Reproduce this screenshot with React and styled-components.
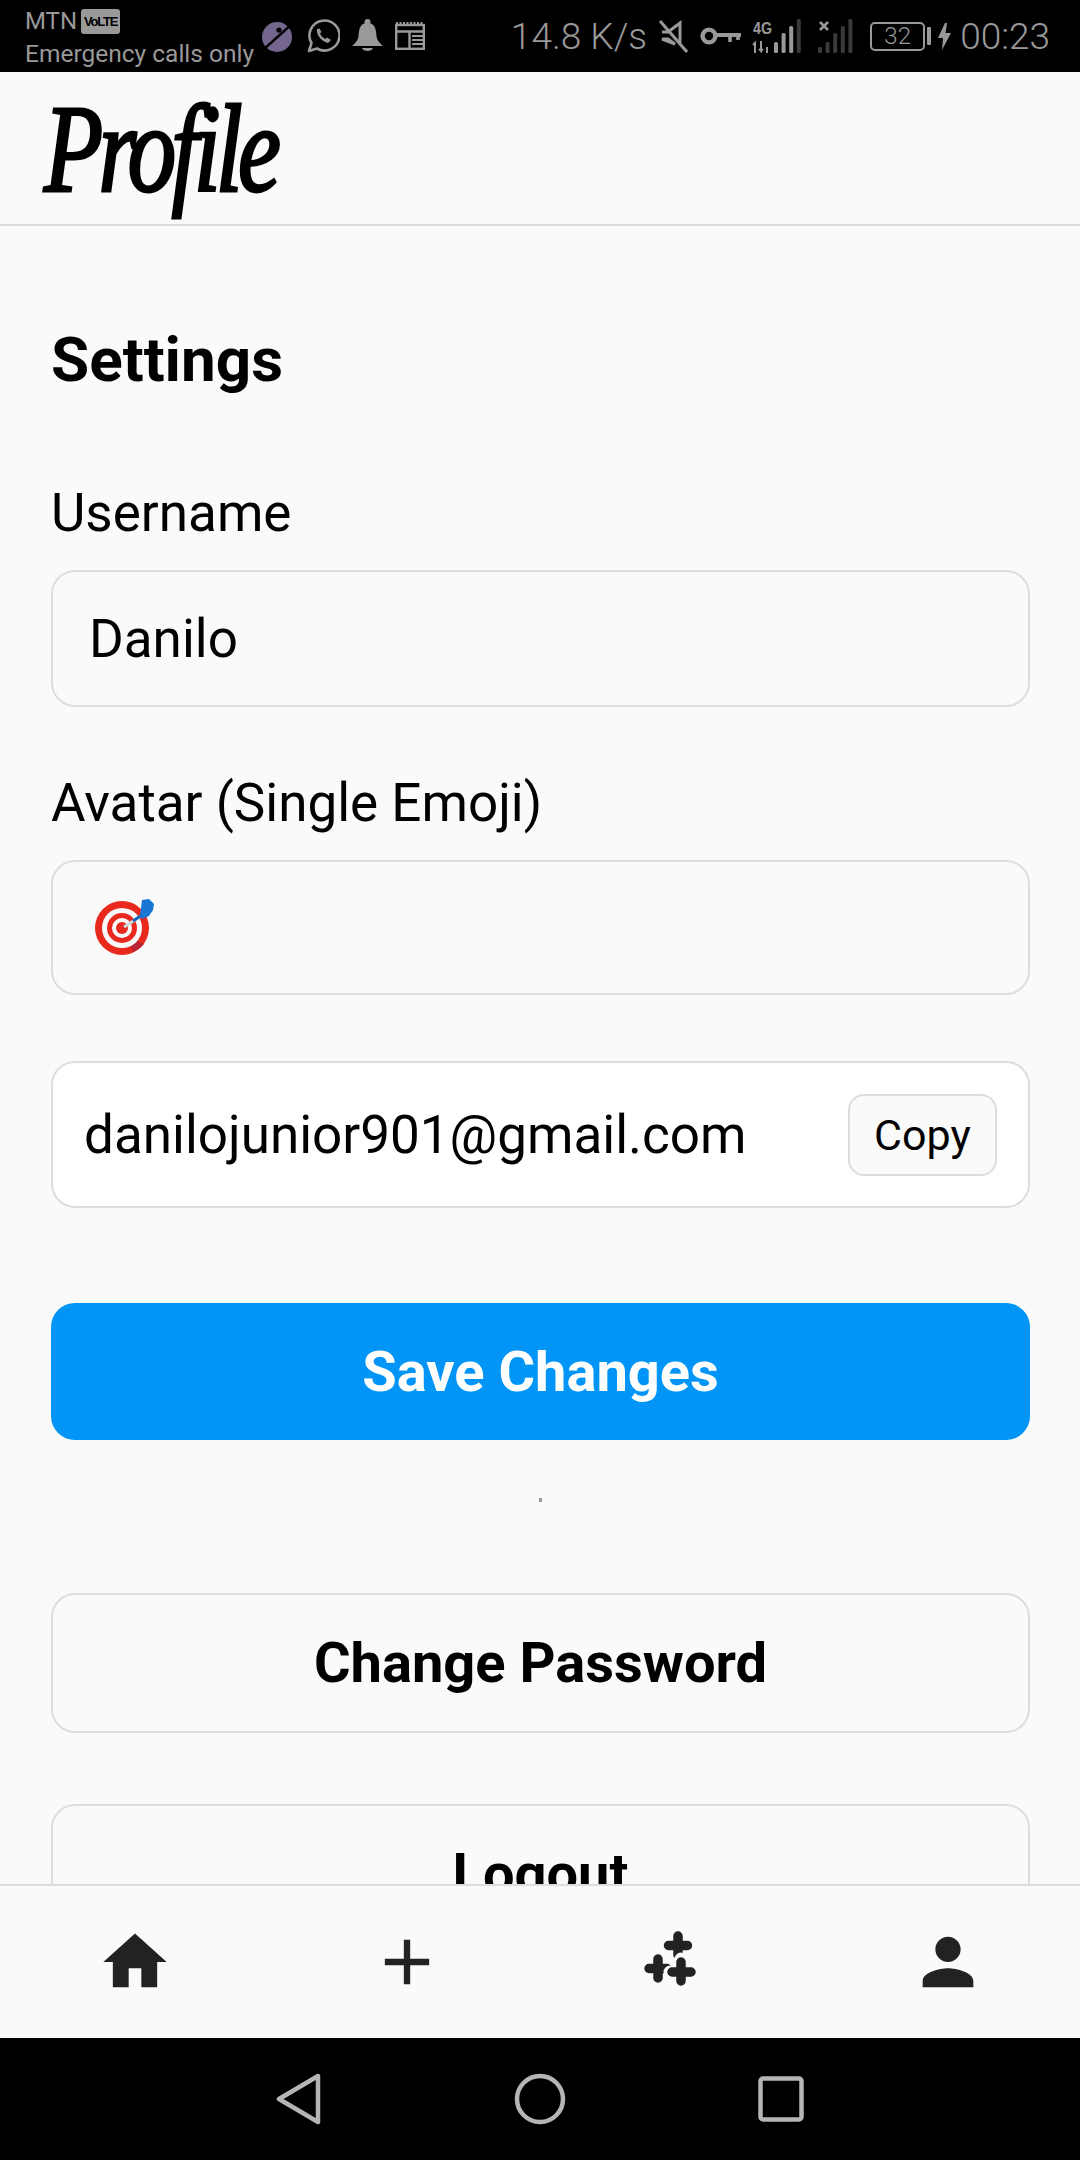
import React from "react";
import styled, { createGlobalStyle } from "styled-components";
import { MdHome, MdAdd, MdPerson } from "react-icons/md";

const GlobalStyle = createGlobalStyle`
  html, body {
    margin: 0;
    padding: 0;
    background: #000;
  }
  * {
    box-sizing: border-box;
  }
`;

const Screen = styled.div`
  width: 1080px;
  height: 2160px;
  display: flex;
  flex-direction: column;
  background: #fafafa;
  font-family: Roboto, "Liberation Sans", sans-serif;
  color: #000;
  overflow: hidden;
`;

/* system status bar */
const StatusBar = styled.div`
  height: 72px;
  flex: none;
  background: #000;
  color: #999;
  display: flex;
  align-items: center;
  justify-content: space-between;
  padding: 0 30px 0 25px;
`;

const StatusLeft = styled.div`
  display: flex;
  align-items: center;
  gap: 12px;
`;

const Carrier = styled.div`
  display: flex;
  flex-direction: column;
  width: 225px;
`;

const CarrierName = styled.div`
  display: flex;
  align-items: center;
  gap: 4px;
  height: 36px;
  font-size: 24px;
`;

const VolteBadge = styled.span`
  background: #999;
  color: #000;
  border-radius: 3px;
  font-family: "Liberation Sans", sans-serif;
  font-size: 13px;
  font-weight: 700;
  letter-spacing: -1.2px;
  line-height: 25px;
  padding: 0 3px;
`;

const CarrierNote = styled.div`
  font-size: 24.5px;
  line-height: 30px;
  white-space: nowrap;
`;

const StatusIcons = styled.div`
  display: flex;
  align-items: center;
  gap: 12px;
`;

const StatusRight = styled.div`
  display: flex;
  align-items: center;
`;

const StatusSlot = styled.span`
  display: flex;
  align-items: center;
  margin-left: ${(p) => p.$left}px;
`;

const StatusText = styled.span`
  font-size: 37px;
  font-weight: 300;
  white-space: nowrap;
`;

const BatteryBody = styled.div`
  width: 55px;
  height: 29px;
  border: 2px solid #999;
  border-radius: 5px;
  display: flex;
  align-items: center;
  justify-content: center;
  font-size: 24px;
  font-weight: 300;
`;

const BatteryCap = styled.div`
  width: 4px;
  height: 18px;
  margin-left: 2px;
  background: #999;
  border-radius: 1px;
`;

const Header = styled.header`
  height: 154px;
  flex: none;
  border-bottom: 2px solid #ddd;
  padding-left: 44px;
  display: flex;
  align-items: center;
`;

const Logo = styled.h1`
  margin: 0;
  font-family: "Liberation Serif", serif;
  font-style: italic;
  font-weight: 400;
  font-size: 124px;
  line-height: 1;
  letter-spacing: -6px;
  -webkit-text-stroke: 3px #000;
  transform-origin: left center;
  transform: translateY(2px) scaleX(0.78);
`;

const Content = styled.main`
  flex: 1;
  min-height: 0;
  overflow: hidden;
  padding: 99px 50px 0 51px;
`;

const PageTitle = styled.h2`
  margin: 0;
  font-size: 62px;
  font-weight: 700;
  line-height: 70px;
`;

const Label = styled.div`
  margin-top: ${(p) => p.$top}px;
  font-size: 53px;
  line-height: 60px;
`;

const Field = styled.div`
  margin-top: 27px;
  height: ${(p) => p.$height}px;
  border: 2px solid #ddd;
  border-radius: 24px;
  padding-left: 36px;
  display: flex;
  align-items: center;
  font-size: 53px;
`;

const EmojiSlot = styled.span`
  display: flex;
  margin: 0 0 3px 6px;
`;

const EmailRow = styled.div`
  margin-top: 66px;
  height: 147px;
  background: #fff;
  border: 2px solid #ddd;
  border-radius: 24px;
  padding: 0 31px;
  display: flex;
  align-items: center;
  justify-content: space-between;
  font-size: 53px;
`;

const CopyButton = styled.div`
  width: 149px;
  height: 82px;
  background: #fafafa;
  border: 2px solid #ddd;
  border-radius: 16px;
  display: flex;
  align-items: center;
  justify-content: center;
  font-size: 43px;
`;

const Button = styled.div`
  margin-top: ${(p) => p.$top}px;
  height: ${(p) => p.$height}px;
  border-radius: 24px;
  display: flex;
  align-items: center;
  justify-content: center;
  font-size: 56px;
  font-weight: 700;
  background: ${(p) => (p.$primary ? "#0095f6" : "transparent")};
  color: ${(p) => (p.$primary ? "#fff" : "#000")};
  border: ${(p) => (p.$primary ? "none" : "2px solid #ddd")};
`;

const Speck = styled.div`
  width: 3px;
  height: 4px;
  margin: 58px auto 0;
  background: #999;
`;

const TabBar = styled.nav`
  height: 154px;
  flex: none;
  border-top: 2px solid #ddd;
  background: #fafafa;
  display: grid;
  grid-template-columns: repeat(4, 1fr);
  color: #222;
`;

const Tab = styled.div`
  display: flex;
  align-items: center;
  justify-content: center;
  padding-left: ${(p) => p.$shift || 0}px;
`;

const ClusterSvg = styled.svg`
  margin: 0 10px 7px 0;
`;

const NavBar = styled.div`
  height: 122px;
  flex: none;
  background: #000;
  display: flex;
  align-items: center;
  justify-content: center;
  gap: 192px;
`;

const PlanetIcon = () => (
  <svg width="32" height="32" viewBox="0 0 32 32">
    <circle cx="15" cy="17" r="15" fill="#75668f" />
    <path d="M1 30 L31 3" stroke="#000" strokeWidth="2.4" />
    <circle cx="17" cy="10" r="2.6" fill="#000" />
  </svg>
);

const WhatsappIcon = () => (
  <svg width="34" height="34" viewBox="0 0 34 34" fill="none">
    <path
      d="M3 32 L5.5 24 A15 15 0 1 1 11 29.5 Z"
      stroke="#999"
      strokeWidth="2.6"
      strokeLinejoin="round"
    />
    <path
      d="M11 10 C10 14 14 22 22 24 L25 21 L21 18.5 L19.5 20 C17 19 15 17 14 14.5 L15.5 13 L13.5 9.5 Z"
      fill="#999"
    />
  </svg>
);

const BellIcon = () => (
  <svg width="31" height="34" viewBox="0 0 31 34" fill="#999">
    <circle cx="15.5" cy="3" r="3" />
    <path d="M15.5 4 C8 4 7 10 6.5 17 C6 22 3 24 0 27 L31 27 C28 24 25 22 24.5 17 C24 10 23 4 15.5 4 Z" />
    <path d="M10 29 L21 29 C20 33 11 33 10 29 Z" />
  </svg>
);

const NewsIcon = () => (
  <svg width="30" height="28" viewBox="0 0 30 28" fill="none" stroke="#999">
    <rect x="1.2" y="3" width="27.6" height="23.8" strokeWidth="2.4" />
    <path d="M1 9.5 H29 M14.5 9.5 V27" strokeWidth="2.4" />
    <path d="M17 14 H28 M17 18 H28 M17 22 H28" strokeWidth="2" />
    <path d="M1 1 H29" strokeWidth="2" strokeDasharray="2 1.5" />
  </svg>
);

const MuteIcon = () => (
  <svg width="30" height="34" viewBox="0 0 30 34" fill="none" stroke="#999">
    <path d="M4 13 H10 L22 4 V24 M17 25 L10 20 H4 Z" strokeWidth="3" />
    <path d="M2 2 L29 33" strokeWidth="3" />
  </svg>
);

const KeyIcon = () => (
  <svg width="41" height="18" viewBox="0 0 41 18" fill="none" stroke="#999">
    <circle cx="9" cy="9" r="6.4" strokeWidth="4.4" />
    <path d="M15 8 H41" strokeWidth="4" />
    <path d="M30 8 V15 M38 8 V13" strokeWidth="3.6" />
  </svg>
);

// signal strength bars, only the first `lit` are bright
const SignalBars = ({ x, lit, total }) => {
  const heights = [6, 11, 20, 27, 34];
  const offset = 5 - total;
  return heights.slice(offset).map((h, i) => (
    <rect
      key={i}
      x={x + i * 7.6}
      y={34 - h}
      width="4"
      height={h}
      rx="1.5"
      fill={i < lit ? "#999" : "#3a3a3a"}
    />
  ));
};

const Signal4G = () => (
  <svg width="53" height="34" viewBox="0 0 53 34" overflow="visible">
    <text
      x="0"
      y="15"
      fontFamily="Liberation Sans, sans-serif"
      fontSize="17"
      fontWeight="700"
      fill="#999"
      textLength="19"
      lengthAdjust="spacingAndGlyphs"
    >
      4G
    </text>
    <path d="M2 34 V24 L0 26 M8 22 V32 L6 30 M8 32 L10 30 M14 34 V28" stroke="#999" strokeWidth="2" fill="none" />
    <SignalBars x={21} lit={3} total={4} />
  </svg>
);

const SignalNone = () => (
  <svg width="36" height="34" viewBox="0 0 36 34">
    <path d="M2 3 L10 11 M10 3 L2 11" stroke="#999" strokeWidth="2.6" />
    <SignalBars x={0} lit={0} total={5} />
  </svg>
);

const BoltIcon = () => (
  <svg width="13" height="27" viewBox="0 0 13 27" fill="#999">
    <path d="M7 0 L0 15 H5 L4 27 L13 10 H7.5 L9 0 Z" />
  </svg>
);

const TargetEmoji = () => (
  <svg width="60" height="58" viewBox="0 0 60 58" role="img" aria-label="target">
    <circle cx="27" cy="31" r="27" fill="#e9291d" />
    <path d="M49 47 A27 27 0 0 1 38 55 L32 40 Z" fill="#b92237" />
    <circle cx="27" cy="31" r="20" fill="#fafafa" />
    <circle cx="27" cy="31" r="15" fill="#e9291d" />
    <circle cx="27" cy="31" r="10" fill="#fafafa" />
    <circle cx="27" cy="31" r="6" fill="#e9291d" />
    <path d="M29 30 L46 19" stroke="#cfd8dc" strokeWidth="3" />
    <path d="M38 24 L47 18" stroke="#1565c0" strokeWidth="3" />
    <path d="M45 19 L47 3 L54 2 L59 7 L58 13 L54 19 L47 22 Z" fill="#1976d2" />
  </svg>
);

const ClusterIcon = () => (
  <ClusterSvg width="52" height="56" viewBox="0 0 52 56" fill="none" strokeLinecap="round">
    <g stroke="#222" strokeWidth="9.5">
      <path d="M34 5 V24 M24.5 14.5 H43.5" />
      <path d="M14 28 V47 M5 37.5 H23" />
    </g>
    <path d="M37 28 V50 M26 41 H47" stroke="#fafafa" strokeWidth="13" />
    <path d="M37 31 V50 M28 41 H47" stroke="#222" strokeWidth="9.5" />
  </ClusterSvg>
);

const BackIcon = () => (
  <svg width="46" height="52" viewBox="0 0 46 52" fill="none">
    <path
      d="M42 3 L42 49 L3 26 Z"
      stroke="#b5b5b5"
      strokeWidth="4.5"
      strokeLinejoin="round"
    />
  </svg>
);

const HomeIcon = () => (
  <svg width="52" height="52" viewBox="0 0 52 52" fill="none">
    <circle cx="26" cy="26" r="23" stroke="#b5b5b5" strokeWidth="4.5" />
  </svg>
);

const RecentsIcon = () => (
  <svg width="46" height="46" viewBox="0 0 46 46" fill="none">
    <rect
      x="2.5"
      y="2.5"
      width="41"
      height="41"
      rx="2.5"
      stroke="#b5b5b5"
      strokeWidth="4.5"
    />
  </svg>
);

const App = () => (
  <Screen>
    <GlobalStyle />
    <StatusBar>
      <StatusLeft>
        <Carrier>
          <CarrierName>
            MTN <VolteBadge>VoLTE</VolteBadge>
          </CarrierName>
          <CarrierNote>Emergency calls only</CarrierNote>
        </Carrier>
        <StatusIcons>
          <PlanetIcon />
          <WhatsappIcon />
          <BellIcon />
          <NewsIcon />
        </StatusIcons>
      </StatusLeft>
      <StatusRight>
        <StatusText>14.8 K/s</StatusText>
        <StatusSlot $left={11}>
          <MuteIcon />
        </StatusSlot>
        <StatusSlot $left={12}>
          <KeyIcon />
        </StatusSlot>
        <StatusSlot $left={12}>
          <Signal4G />
        </StatusSlot>
        <StatusSlot $left={12}>
          <SignalNone />
        </StatusSlot>
        <StatusSlot $left={16}>
          <BatteryBody>32</BatteryBody>
          <BatteryCap />
        </StatusSlot>
        <StatusSlot $left={7}>
          <BoltIcon />
        </StatusSlot>
        <StatusSlot $left={9}>
          <StatusText>00:23</StatusText>
        </StatusSlot>
      </StatusRight>
    </StatusBar>

    <Header>
      <Logo>Profile</Logo>
    </Header>

    <Content>
      <PageTitle>Settings</PageTitle>

      <Label $top={88}>Username</Label>
      <Field $height={137}>Danilo</Field>

      <Label $top={66}>Avatar (Single Emoji)</Label>
      <Field $height={135}>
        <EmojiSlot>
          <TargetEmoji />
        </EmojiSlot>
      </Field>

      <EmailRow>
        danilojunior901@gmail.com
        <CopyButton>Copy</CopyButton>
      </EmailRow>

      <Button $primary $top={95} $height={137}>
        Save Changes
      </Button>
      <Speck />

      <Button $top={91} $height={140}>
        Change Password
      </Button>
      <Button $top={71} $height={140}>
        Logout
      </Button>
    </Content>

    <TabBar>
      <Tab>
        <MdHome size={76} />
      </Tab>
      <Tab $shift={3}>
        <MdAdd size={76} />
      </Tab>
      <Tab>
        <ClusterIcon />
      </Tab>
      <Tab $shift={5}>
        <MdPerson size={76} />
      </Tab>
    </TabBar>

    <NavBar>
      <BackIcon />
      <HomeIcon />
      <RecentsIcon />
    </NavBar>
  </Screen>
);

export default App;
